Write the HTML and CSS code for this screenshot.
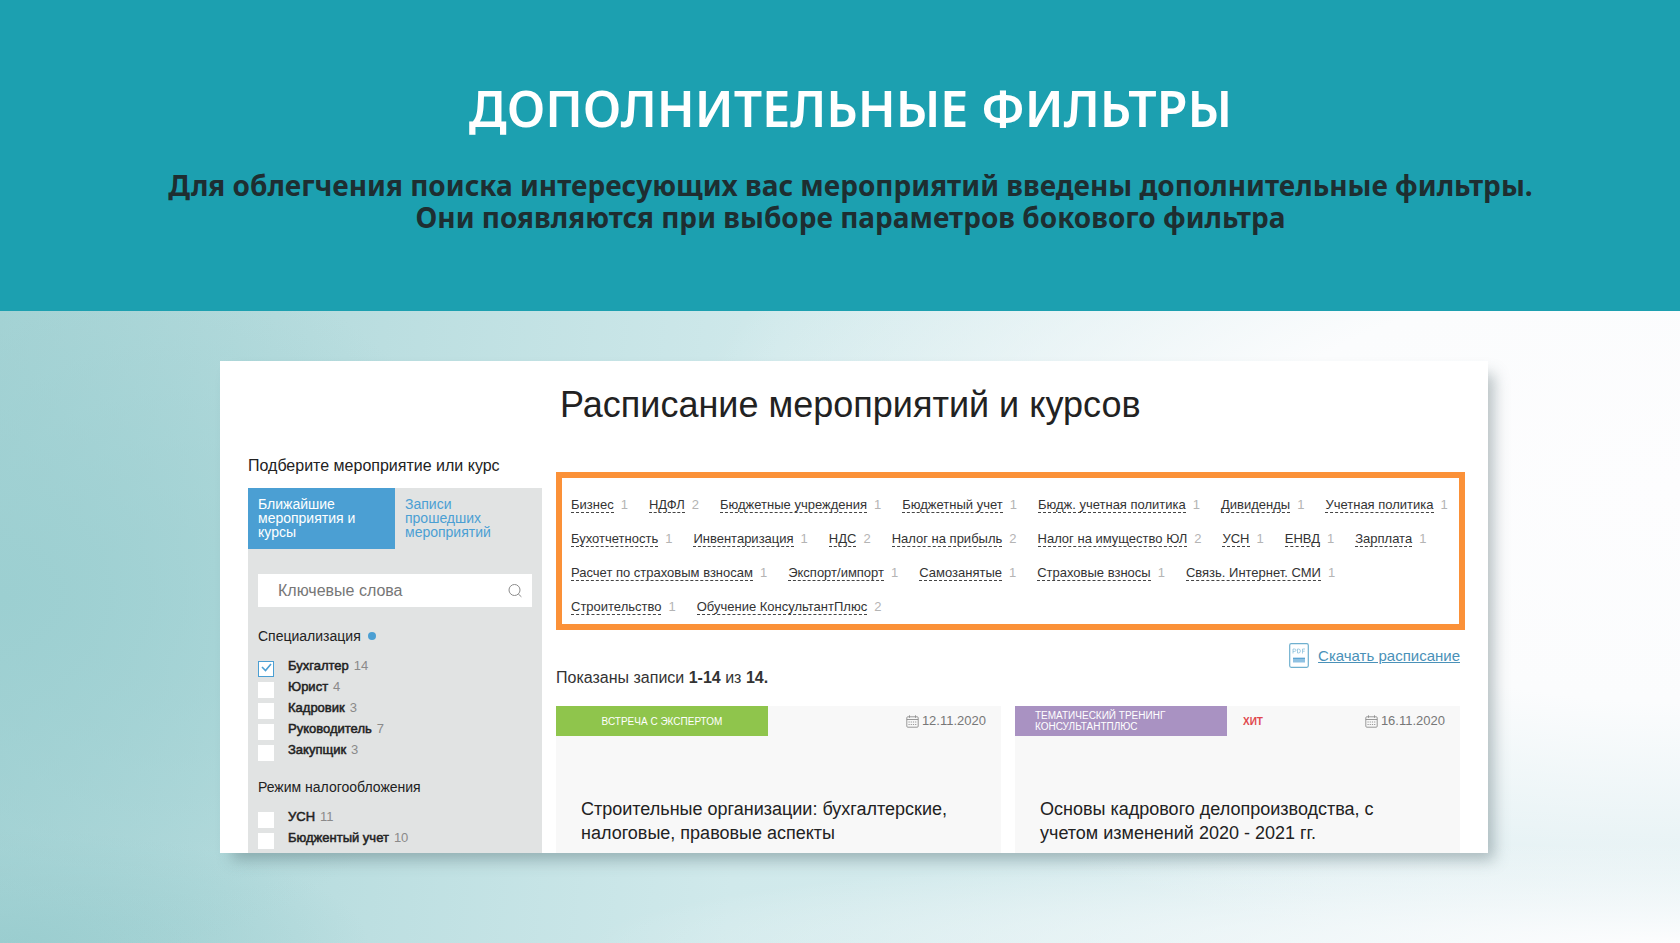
FILE: index.html
```html
<!DOCTYPE html>
<html lang="ru">
<head>
<meta charset="utf-8">
<title>Дополнительные фильтры</title>
<meta name="viewport" content="width=device-width, initial-scale=1">
<link rel="stylesheet" href="styles.css">
</head>
<body>
<header class="banner">
  <h1 class="banner-title">ДОПОЛНИТЕЛЬНЫЕ ФИЛЬТРЫ</h1>
  <p class="banner-text">Для облегчения поиска интересующих вас мероприятий введены дополнительные фильтры.<br>Они появляются при выборе параметров бокового фильтра</p>
</header>
<main class="stage">
  <div class="sheet">
    <h2 class="sheet-title">Расписание мероприятий и курсов</h2>
    <aside class="side">
      <p class="side-lead">Подберите мероприятие или курс</p>
      <div class="panel">
        <div class="tabs">
          <button type="button" class="tab tab-active">Ближайшие мероприятия и курсы</button>
          <button type="button" class="tab">Записи прошедших мероприятий</button>
        </div>
        <div class="panel-body">
          <div class="search">
            <input class="search-input" type="text" placeholder="Ключевые слова" aria-label="Ключевые слова">
            <svg class="search-icon" viewBox="0 0 14 14" fill="none" stroke="#8b8b8b" stroke-width="1"><circle cx="6.5" cy="6" r="5.500"/><path d="M10.300 10L13.400 12.800"/></svg>
          </div>
          <fieldset class="group">
            <legend class="group-title">Специализация<span class="dot"></span></legend>
            <label class="check"><input type="checkbox" checked><span class="check-text">Бухгалтер</span><span class="count">14</span></label>
            <label class="check"><input type="checkbox"><span class="check-text">Юрист</span><span class="count">4</span></label>
            <label class="check"><input type="checkbox"><span class="check-text">Кадровик</span><span class="count">3</span></label>
            <label class="check"><input type="checkbox"><span class="check-text">Руководитель</span><span class="count">7</span></label>
            <label class="check"><input type="checkbox"><span class="check-text">Закупщик</span><span class="count">3</span></label>
          </fieldset>
          <fieldset class="group">
            <legend class="group-title">Режим налогообложения</legend>
            <label class="check"><input type="checkbox"><span class="check-text">УСН</span><span class="count">11</span></label>
            <label class="check"><input type="checkbox"><span class="check-text">Бюджентый учет</span><span class="count">10</span></label>
          </fieldset>
        </div>
      </div>
    </aside>
    <section class="content">
      <div class="filters">
        <ul class="filter-row">
          <li><a href="#">Бизнес</a><span>1</span></li>
          <li><a href="#">НДФЛ</a><span>2</span></li>
          <li><a href="#">Бюджетные учреждения</a><span>1</span></li>
          <li><a href="#">Бюджетный учет</a><span>1</span></li>
          <li><a href="#">Бюдж. учетная политика</a><span>1</span></li>
          <li><a href="#">Дивиденды</a><span>1</span></li>
          <li><a href="#">Учетная политика</a><span>1</span></li>
        </ul>
        <ul class="filter-row">
          <li><a href="#">Бухотчетность</a><span>1</span></li>
          <li><a href="#">Инвентаризация</a><span>1</span></li>
          <li><a href="#">НДС</a><span>2</span></li>
          <li><a href="#">Налог на прибыль</a><span>2</span></li>
          <li><a href="#">Налог на имущество ЮЛ</a><span>2</span></li>
          <li><a href="#">УСН</a><span>1</span></li>
          <li><a href="#">ЕНВД</a><span>1</span></li>
          <li><a href="#">Зарплата</a><span>1</span></li>
        </ul>
        <ul class="filter-row">
          <li><a href="#">Расчет по страховым взносам</a><span>1</span></li>
          <li><a href="#">Экспорт/импорт</a><span>1</span></li>
          <li><a href="#">Самозанятые</a><span>1</span></li>
          <li><a href="#">Страховые взносы</a><span>1</span></li>
          <li><a href="#">Связь. Интернет. СМИ</a><span>1</span></li>
        </ul>
        <ul class="filter-row">
          <li><a href="#">Строительство</a><span>1</span></li>
          <li><a href="#">Обучение КонсультантПлюс</a><span>2</span></li>
        </ul>
      </div>
      <div class="download">
        <svg class="pdf" viewBox="0 0 20 25" fill="none"><rect x=".7" y=".7" width="18.6" height="23.6" rx="1.5" stroke="#6fb0cf" stroke-width="1.2"/><path d="M4 10.500V6h1.600q1.400 0 1.400 1.200T5.600 8.400H4M8.500 6v4h1q1.900 0 1.900-2T9.500 6zM13.500 10.500V6H16M13.500 8.200h2.200" stroke="#8cc0dc" stroke-width=".8"/><path d="M4 14.500h12v5H4z" fill="#8fc1e2"/><path d="M4 15.500h12" stroke="#5fa5d2"/></svg>
        <a class="download-link" href="#">Скачать расписание</a>
      </div>
      <p class="summary">Показаны записи <b>1-14</b> из <b>14.</b></p>
      <div class="cards">
        <article class="card">
          <div class="card-head">
            <span class="tag tag-green">ВСТРЕЧА С ЭКСПЕРТОМ</span>
            <time class="date"><svg class="cal" viewBox="0 0 13 13" fill="none" stroke="#8d8d8d" stroke-width=".9"><rect x=".8" y="1.800" width="11.400" height="10.400" rx="1"/><path d="M.8 4.500h11.400M3.500.3v2.500M9.500.3v2.500"/><path d="M2.500 7h8M2.500 9.500h8" stroke-dasharray="1.200 1"/></svg>12.11.2020</time>
          </div>
          <h3 class="card-title">Строительные организации: бухгалтерские, налоговые, правовые аспекты</h3>
        </article>
        <article class="card">
          <div class="card-head">
            <span class="tag tag-violet">ТЕМАТИЧЕСКИЙ ТРЕНИНГ КОНСУЛЬТАНТПЛЮС</span>
            <span class="hit">ХИТ</span>
            <time class="date"><svg class="cal" viewBox="0 0 13 13" fill="none" stroke="#8d8d8d" stroke-width=".9"><rect x=".8" y="1.800" width="11.400" height="10.400" rx="1"/><path d="M.8 4.500h11.400M3.500.3v2.500M9.500.3v2.500"/><path d="M2.500 7h8M2.500 9.500h8" stroke-dasharray="1.200 1"/></svg>16.11.2020</time>
          </div>
          <h3 class="card-title">Основы кадрового делопроизводства, с учетом изменений 2020 - 2021 гг.</h3>
        </article>
      </div>
    </section>
  </div>
</main>
</body>
</html>
```
FILE: styles.css
```css
*{box-sizing:border-box}
body{margin:0;min-height:100vh;display:flex;flex-direction:column;font-family:"Liberation Sans",Arial,sans-serif;color:#222}
h1,h2,h3,p,ul,fieldset{margin:0;padding:0;border:0;font-weight:400}
ul{list-style:none}
.banner{background:#1ca0b0;text-align:center;padding:72px 0 78px 21px;font-family:"Noto Sans","Open Sans",sans-serif}
.banner-title{font-size:50px;line-height:72px;font-weight:600;color:#fff}
.banner-text{margin-top:25px;font-size:28px;line-height:32px;font-weight:700;color:#1e2e31}
.stage{flex:1;padding:50px 192px 91px 220px;background:
  radial-gradient(ellipse 65% 16% at 100% 100%,#fdfdfe 0,rgba(253,253,254,0) 100%),
  radial-gradient(ellipse 60% 75% at 100% 28%,#fdfdfe 0,#fbfcfd 45%,rgba(251,252,253,0) 100%),
  radial-gradient(ellipse 30% 60% at 0 45%,#9ccfd1 0,rgba(156,207,209,0) 100%),
  radial-gradient(ellipse 22% 18% at 0 100%,#9acdcf 0,rgba(154,205,207,0) 100%),
  linear-gradient(95deg,#a6d3d5 0,#b7dcde 18%,#d0e9eb 45%,#d9ecef 80%,#daecef 100%)}
.sheet{display:grid;grid-template-columns:294px 1fr;column-gap:14px;padding:0 23px 0 28px;background:#fff;box-shadow:9px 10px 14px -3px rgba(70,95,100,.38)}
.sheet-title{grid-column:2;font-size:36px;line-height:42px;padding:23px 0 28px 4px}
.side{display:flex;flex-direction:column;padding-top:2px}
.side-lead{font-size:16px;line-height:20px;margin-bottom:12px}
.panel{flex:1;background:#e1e3e3}
.tabs{display:grid;grid-template-columns:1fr 1fr}
.tab{border:0;background:none;color:#4b9fd3;font:14px/14px "Liberation Sans",Arial,sans-serif;text-align:left;padding:9px 30px 10px 10px;cursor:pointer}
.tab-active{background:#4b9fd3;color:#fff}
.panel-body{padding:25px 10px 0}
.search{display:flex;align-items:center;height:33px;background:#fff;padding:0 10px 0 20px;margin-bottom:20px}
.search-input{flex:1;min-width:0;border:0;outline:0;padding:0;background:none;font:16px/20px "Liberation Sans",Arial,sans-serif}
.search-input::placeholder{color:#777;opacity:1}
.search-icon{width:14px;height:14px}
.group{min-width:0;margin-bottom:14px}
.group:last-child{margin-bottom:0}
.group-title{display:flex;align-items:center;padding:0;font-size:14px;line-height:18px;margin-bottom:14px}
.dot{width:8px;height:8px;border-radius:50%;background:#4b9fd3;margin-left:7px}
.check{display:flex;align-items:flex-start;height:21px;font-size:13px;line-height:14px}
.check input{appearance:none;width:16px;height:16px;margin:2px 14px 0 0;background:#fff}
.check input:checked{border:1px solid #4b9fd3;background:#fff url("data:image/svg+xml,%3Csvg xmlns='http://www.w3.org/2000/svg' viewBox='0 0 14 14'%3E%3Cpath d='M3 5l3.500 3.500L12 2' fill='none' stroke='%234b9fd3' stroke-width='1.600'/%3E%3C/svg%3E")}
.check-text{-webkit-text-stroke:.5px #222}
.count{margin-left:5px;color:#8a8a8a}
.content{min-width:0}
.filters{border:6px solid #fb9138;background:#fff;margin-top:18px;padding:10px 9px 0}
.filter-row{display:flex;gap:21px;height:34px;align-items:center;font-size:13px;line-height:15px;white-space:nowrap}
.filter-row li{display:flex;gap:7px}
.filter-row a{color:#333;text-decoration:none;border-bottom:1px dashed #444}
.filter-row span{color:#b4b4b4}
.download{display:flex;justify-content:flex-end;align-items:center;gap:9px;padding:13px 5px 0 0}
.pdf{width:20px;height:25px}
.download-link{color:#4a91b8;font-size:15px;line-height:20px}
.summary{font-size:16px;line-height:20px;padding-bottom:18px;color:#333}
.cards{display:grid;grid-template-columns:1fr 1fr;gap:14px;padding-right:5px}
.card{background:#f8f8f8;padding-bottom:8px}
.card-head{display:flex;align-items:center;padding-right:15px;height:30px}
.tag{width:212px;height:30px;display:flex;align-items:center;color:#fff;font-size:10px;line-height:11px;padding:0 20px}
.tag-green{background:#8fc54c;justify-content:center}
.tag-violet{background:#a992c2}
.hit{margin-left:16px;font-size:10px;font-weight:700;color:#e0474c}
.date{margin-left:auto;display:flex;align-items:center;gap:3px;font-size:13px;line-height:16px;color:#777}
.cal{width:13px;height:13px}
.card-title{font-size:18px;line-height:24px;padding:61px 25px 0;min-height:108px}
```
